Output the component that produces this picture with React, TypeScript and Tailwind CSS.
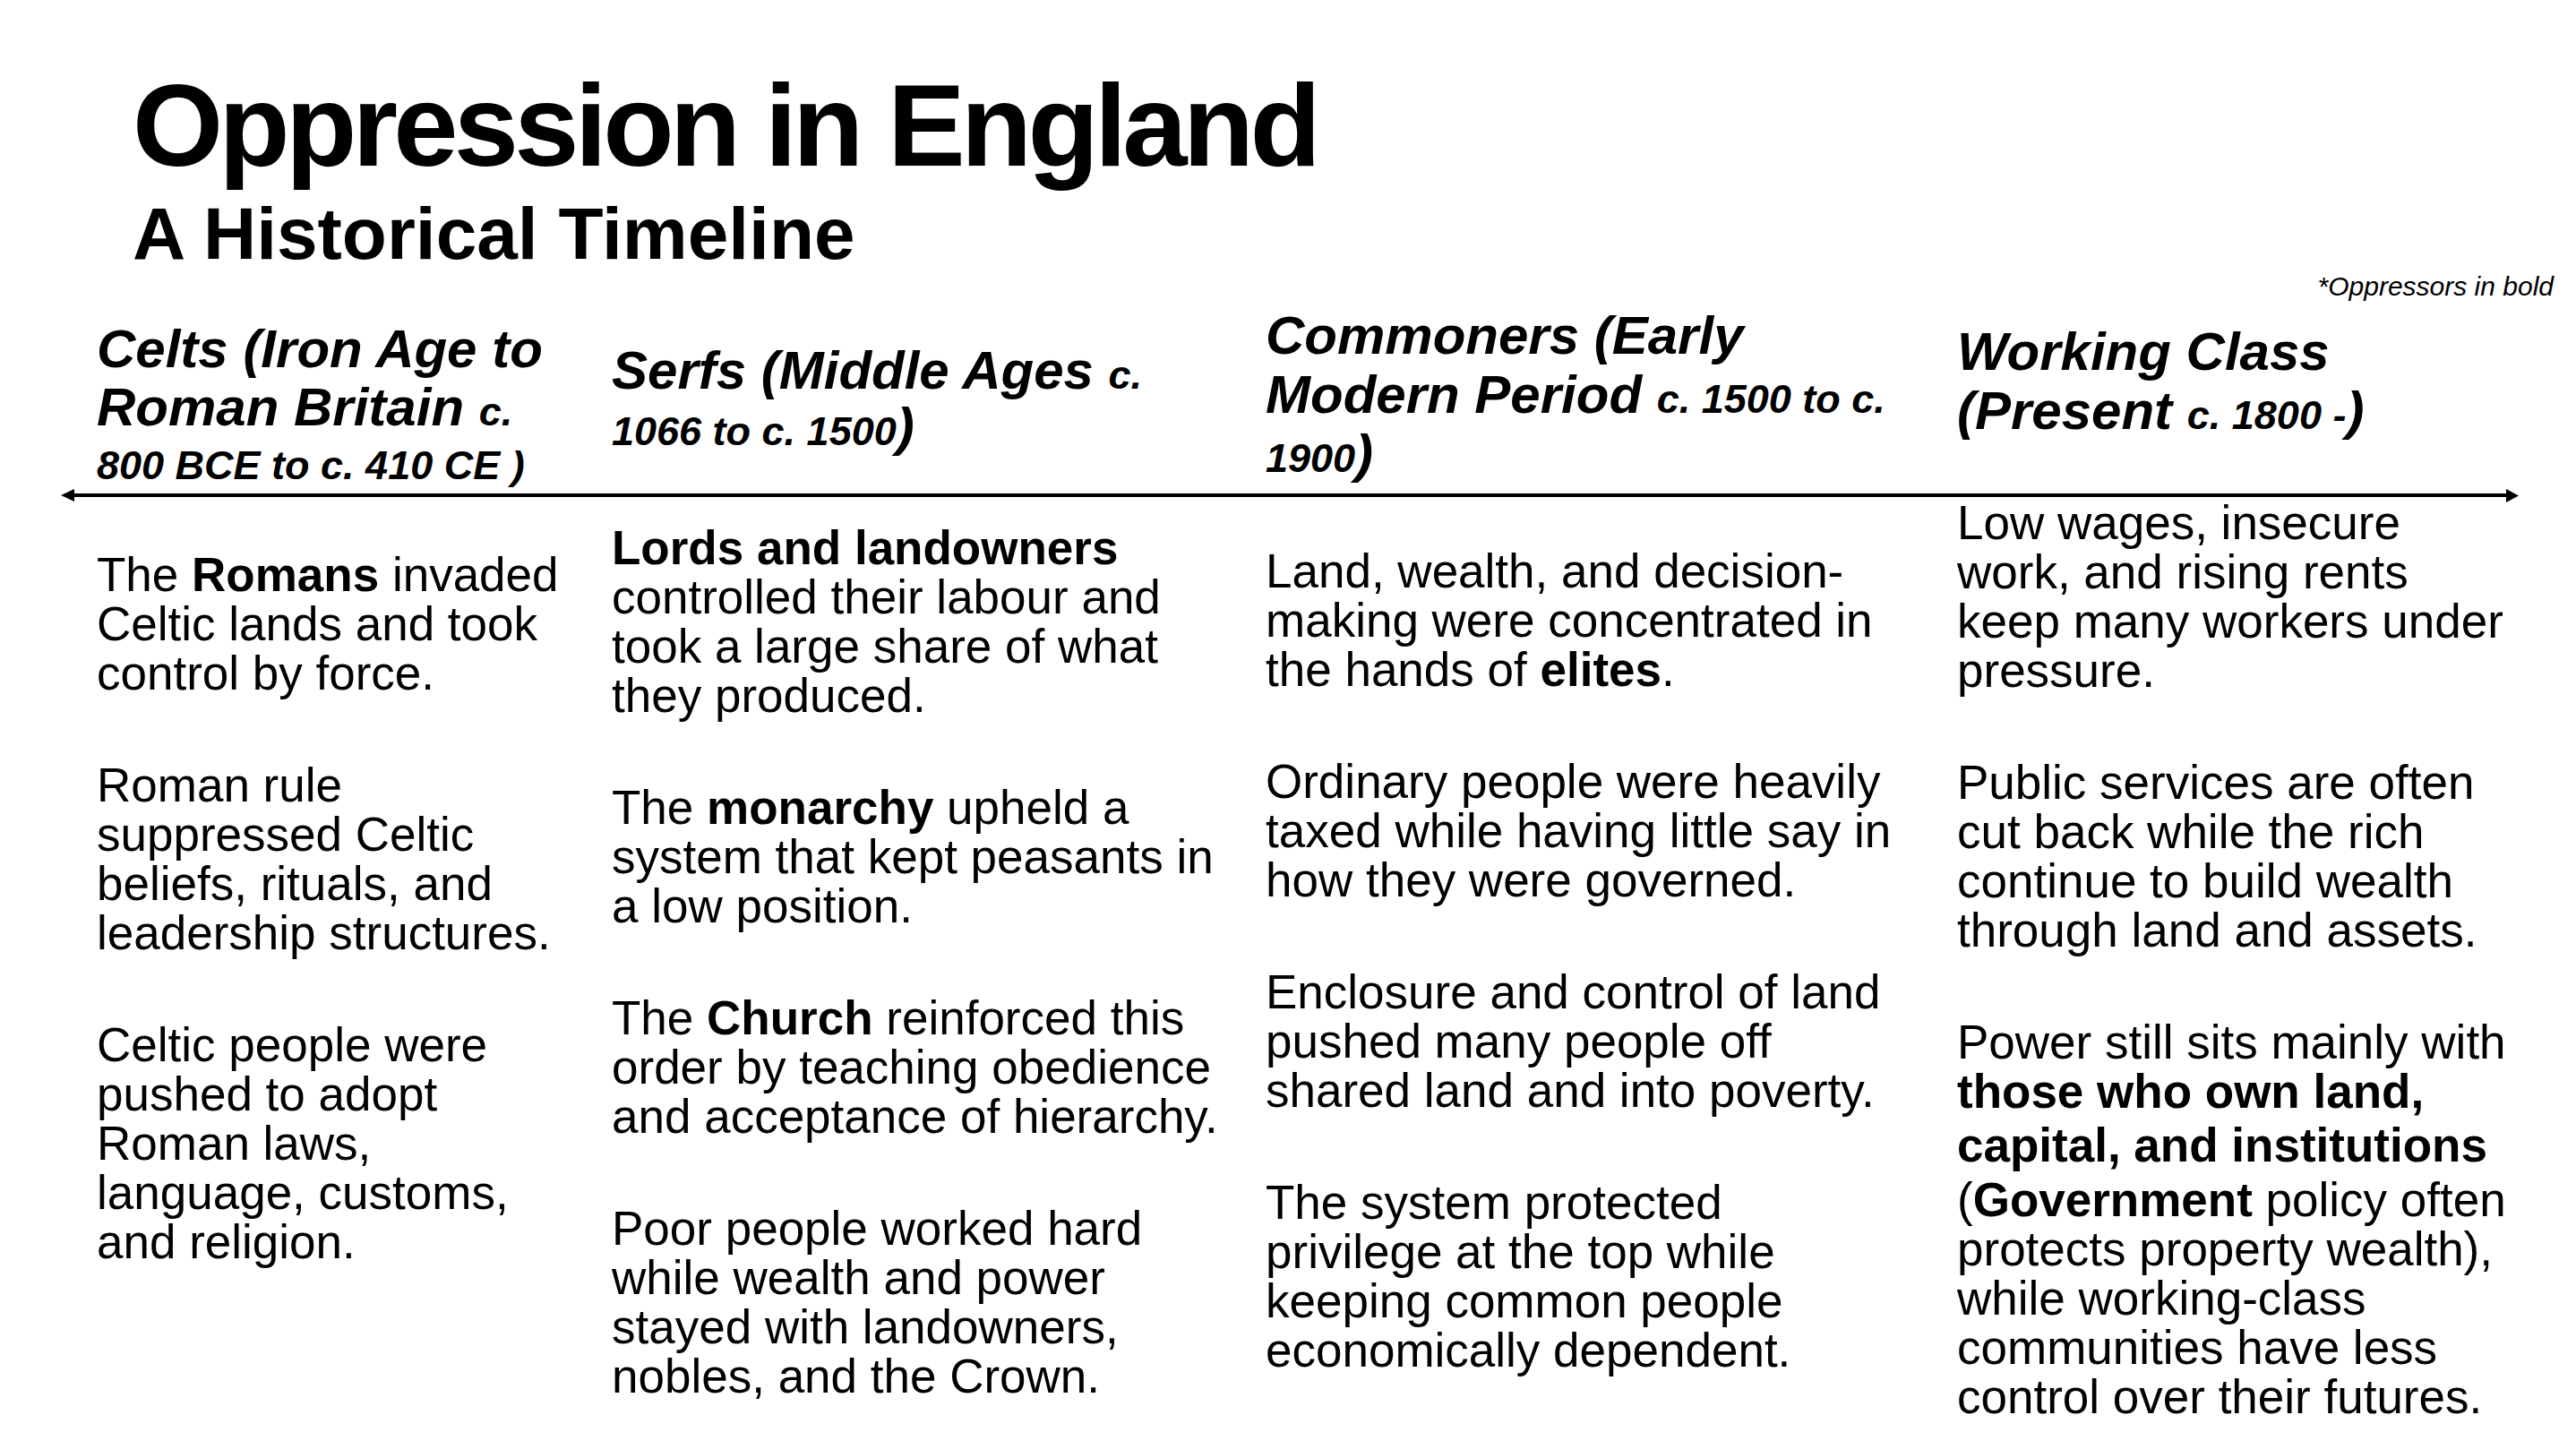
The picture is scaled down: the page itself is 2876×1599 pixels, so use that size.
import React from 'react';

type Seg = string | { b: string };
type Line = Seg[] | { segs: Seg[]; className: string };
type Para = Line[];

const b = (t: string): Seg => ({ b: t });

// body paragraphs, one array per line so the breaks match the slide
const celts: Para[] = [
  [['The ', b('Romans'), ' invaded'], ['Celtic lands and took'], ['control by force.']],
  [['Roman rule'], ['suppressed Celtic'], ['beliefs, rituals, and'], ['leadership structures.']],
  [['Celtic people were'], ['pushed to adopt'], ['Roman laws,'], ['language, customs,'], ['and religion.']],
];

const serfs: Para[] = [
  [[b('Lords and landowners')], ['controlled their labour and'], ['took a large share of what'], ['they produced.']],
  [['The ', b('monarchy'), ' upheld a'], ['system that kept peasants in'], ['a low position.']],
  [['The ', b('Church'), ' reinforced this'], ['order by teaching obedience'], ['and acceptance of hierarchy.']],
  [['Poor people worked hard'], ['while wealth and power'], ['stayed with landowners,'], ['nobles, and the Crown.']],
];

const commoners: Para[] = [
  [['Land, wealth, and decision-'], ['making were concentrated in'], ['the hands of ', b('elites'), '.']],
  [['Ordinary people were heavily'], ['taxed while having little say in'], ['how they were governed.']],
  [['Enclosure and control of land'], ['pushed many people off'], ['shared land and into poverty.']],
  [['The system protected'], ['privilege at the top while'], ['keeping common people'], ['economically dependent.']],
];

const workers: Para[] = [
  [['Low wages, insecure'], ['work, and rising rents'], ['keep many workers under'], ['pressure.']],
  [['Public services are often'], ['cut back while the rich'], ['continue to build wealth'], ['through land and assets.']],
  [
    ['Power still sits mainly with'],
    [b('those who own land,')],
    { segs: [b('capital, and institutions')], className: 'mt-[5px]' },
    { segs: ['(', b('Government'), ' policy often'], className: 'mt-[6px]' },
    ['protects property wealth),'],
    ['while working-class'],
    ['communities have less'],
    ['control over their futures.'],
  ],
];

function Body({ paras, className }: { paras: Para[]; className: string }) {
  return (
    <div className={`flex flex-col gap-[70px] text-[53px] leading-[55px] whitespace-nowrap ${className}`}>
      {paras.map((p, i) => (
        <p key={i}>
          {p.map((line, j) => {
            const segs = Array.isArray(line) ? line : line.segs;
            const extra = Array.isArray(line) ? '' : line.className;
            return (
              <span key={j} className={`block ${extra}`}>
                {segs.map((seg, k) =>
                  typeof seg === 'string' ? (
                    <React.Fragment key={k}>{seg}</React.Fragment>
                  ) : (
                    <strong key={k} className="font-bold">
                      {seg.b}
                    </strong>
                  )
                )}
              </span>
            );
          })}
        </p>
      ))}
    </div>
  );
}

function Arrow() {
  return (
    <div className="ml-[68px] mr-[64px] mt-[1px] flex h-[14px] items-center">
      <svg width="15" height="14" viewBox="0 0 15 14" className="shrink-0">
        <path d="M0 7 L15 0 L15 14 Z" fill="#000" />
      </svg>
      <div className="h-[4px] flex-1 bg-black" />
      <svg width="14" height="15" viewBox="0 0 14 15" className="shrink-0">
        <path d="M14 7.5 L0 0 L0 15 Z" fill="#000" />
      </svg>
    </div>
  );
}

export default function App() {
  return (
    <div className="min-h-[1599px] w-full overflow-hidden bg-white font-['Liberation_Sans',Arial,sans-serif] text-black">
      {/* Title */}
      <div className="pl-[148px] pt-[75px]">
        <h1 className="text-[130px] font-bold leading-none tracking-[-4.8px]">Oppression in England</h1>
        <h2 className="mt-[15px] text-[82px] font-bold leading-none">A Historical Timeline</h2>
      </div>

      <p className="mt-[3px] pr-[25px] text-right text-[30px] italic leading-none">*Oppressors in bold</p>

      {/* Period headings */}
      <div className="mt-[7px] grid grid-cols-[575px_730px_772px_1fr] items-start pl-[108px] text-[60px] font-bold italic leading-[66px] whitespace-nowrap">
        <div className="mt-[15px]">
          <div>Celts (Iron Age to</div>
          <div className="leading-[64px]">
            Roman Britain <span className="text-[45px] leading-none">c.</span>
          </div>
          <div className="mt-[8px] text-[45px] leading-[50px]">800 BCE to c. 410 CE )</div>
        </div>
        <div className="mt-[39px]">
          <div>
            Serfs (Middle Ages <span className="text-[45px] leading-none">c.</span>
          </div>
          <div className="leading-[60px]">
            <span className="text-[45px] leading-none">1066 to c. 1500</span>)
          </div>
        </div>
        <div>
          <div>Commoners (Early</div>
          <div>
            Modern Period <span className="text-[45px] leading-none">c. 1500 to c.</span>
          </div>
          <div>
            <span className="text-[45px] leading-none">1900</span>)
          </div>
        </div>
        <div className="mt-[18px]">
          <div>Working Class</div>
          <div>
            (Present <span className="text-[45px] leading-none">c. 1800 -</span>)
          </div>
        </div>
      </div>

      <Arrow />

      {/* Body text */}
      <div className="-mt-[4px] grid grid-cols-[575px_730px_772px_1fr] items-start pl-[108px]">
        <Body paras={celts} className="mt-[58px]" />
        <Body paras={serfs} className="mt-[28px]" />
        <Body paras={commoners} className="mt-[54px]" />
        <Body paras={workers} className="mt-0" />
      </div>
    </div>
  );
}
